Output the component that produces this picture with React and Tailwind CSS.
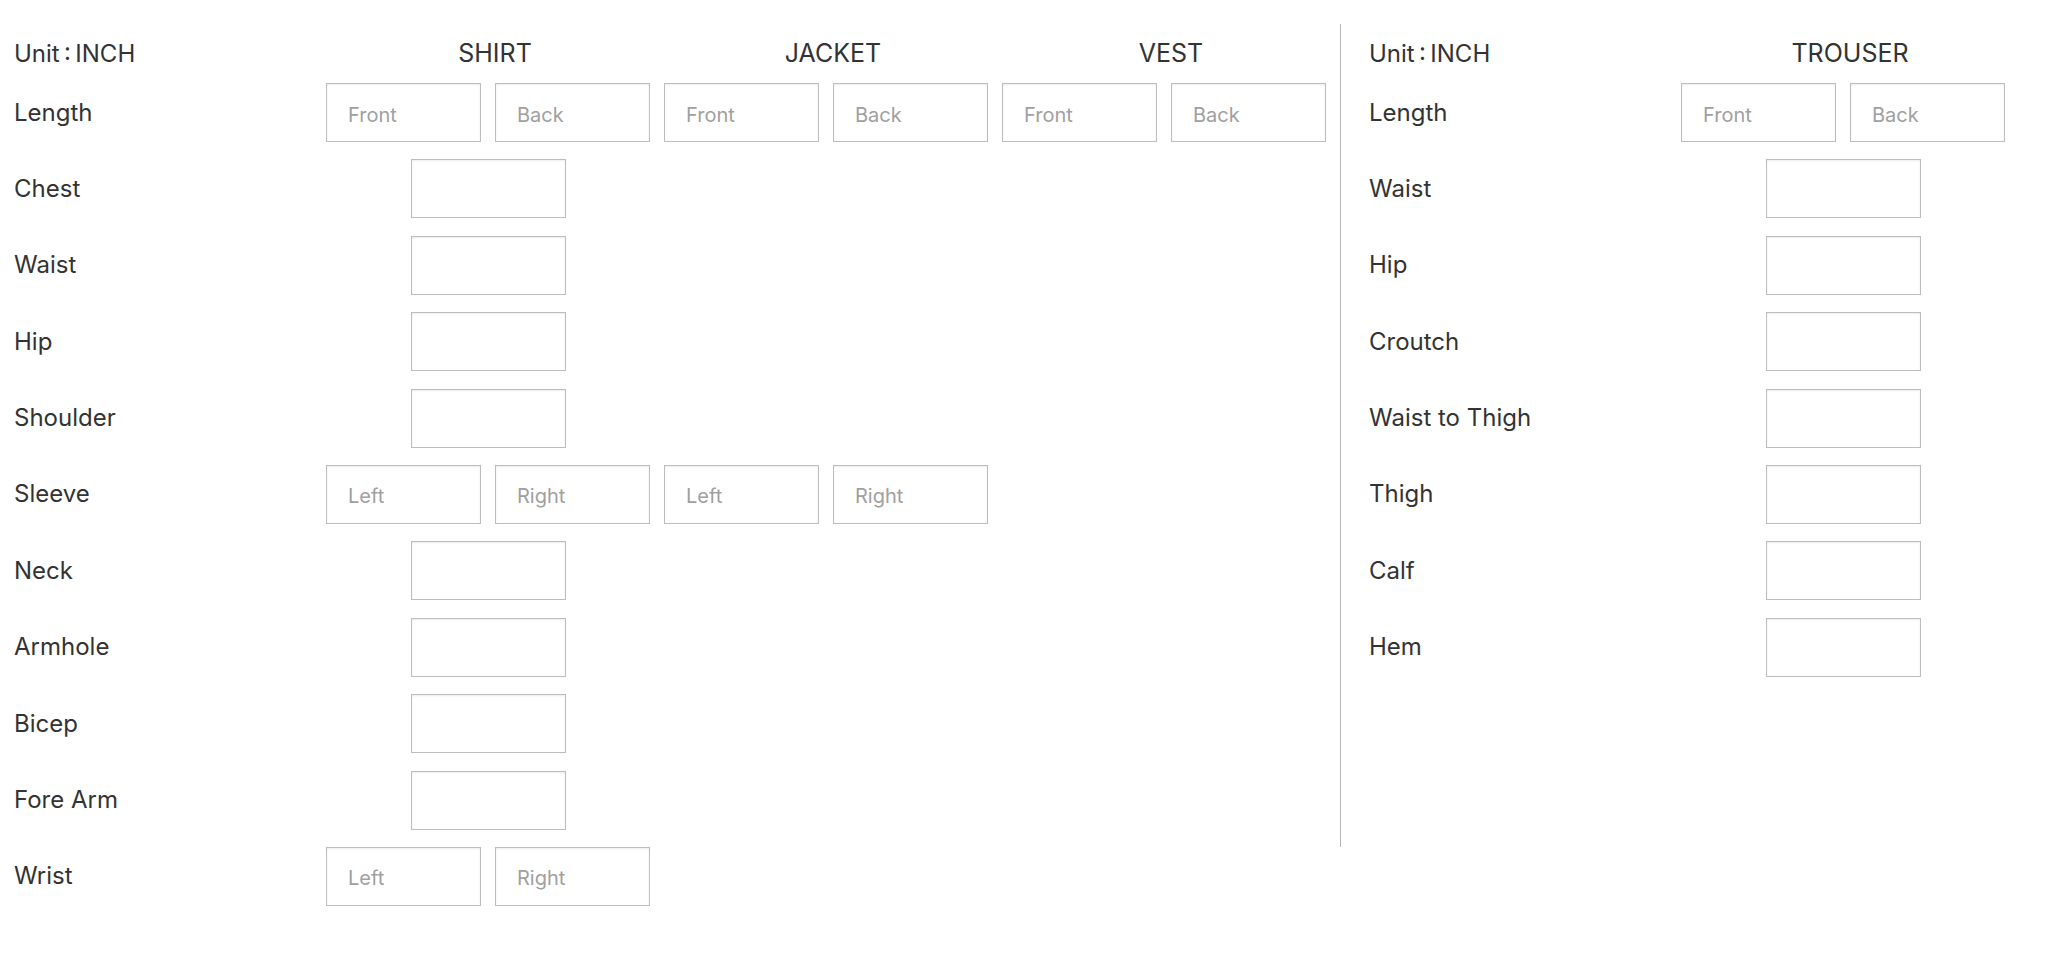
import { useState } from "react";

const LEFT_GROUPS = ["SHIRT", "JACKET", "VEST"];

// each entry: label + one cell per garment column
const leftRows = [
  { label: "Length", cells: [["Front", "Back"], ["Front", "Back"], ["Front", "Back"]] },
  { label: "Chest", cells: ["single"] },
  { label: "Waist", cells: ["single"] },
  { label: "Hip", cells: ["single"] },
  { label: "Shoulder", cells: ["single"] },
  { label: "Sleeve", cells: [["Left", "Right"], ["Left", "Right"]] },
  { label: "Neck", cells: ["single"] },
  { label: "Armhole", cells: ["single"] },
  { label: "Bicep", cells: ["single"] },
  { label: "Fore Arm", cells: ["single"] },
  { label: "Wrist", cells: [["Left", "Right"]] },
];

const rightRows = [
  { label: "Length", cells: [["Front", "Back"]] },
  { label: "Waist", cells: ["single"] },
  { label: "Hip", cells: ["single"] },
  { label: "Croutch", cells: ["single"] },
  { label: "Waist to Thigh", cells: ["single"] },
  { label: "Thigh", cells: ["single"] },
  { label: "Calf", cells: ["single"] },
  { label: "Hem", cells: ["single"] },
];

const inputClass =
  "w-[155px] h-[59px] border border-[#bdbdbd] bg-white pl-[21px] pt-[4px] text-[20px] text-[#333] placeholder:text-[#a0a0a0] shadow-[inset_0_1px_2px_rgba(0,0,0,0.08)] outline-none focus:border-[#888]";

const MeasureInput = ({ placeholder }) => {
  const [value, setValue] = useState("");
  return (
    <input
      type="text"
      value={value}
      placeholder={placeholder}
      onChange={(e) => setValue(e.target.value)}
      className={inputClass}
    />
  );
};

const Cell = ({ cell }) => {
  if (cell === "single") {
    return (
      <div className="w-[338px] pr-[14px] flex justify-center">
        <MeasureInput />
      </div>
    );
  }
  return (
    <div className="w-[338px] flex gap-[14px]">
      <MeasureInput placeholder={cell[0]} />
      <MeasureInput placeholder={cell[1]} />
    </div>
  );
};

const Section = ({ groups, rows }) => (
  <div className="flex flex-col">
    {/* Header */}
    <div className="h-[59px] flex items-center">
      <div className="w-[312px] text-[24px] text-[#333]">Unit&thinsp;:&thinsp;INCH</div>
      {groups.map((g) => (
        <div key={g} className="w-[338px] text-center text-[25px] text-[#333]">
          {g}
        </div>
      ))}
    </div>

    {/* Measurement rows */}
    <div className="flex flex-col gap-[17.4px]">
      {rows.map((row) => (
        <div key={row.label} className="h-[59px] flex items-center">
          <div className="w-[312px] text-[24px] text-[#333]">{row.label}</div>
          {row.cells.map((cell, i) => (
            <Cell key={i} cell={cell} />
          ))}
        </div>
      ))}
    </div>
  </div>
);

export default function App() {
  return (
    <div className="min-h-screen w-full bg-white font-['Inter',sans-serif] pt-[24px]">
      <div className="flex items-start">
        <div className="w-[1340px] pl-[14px]">
          <Section groups={LEFT_GROUPS} rows={leftRows} />
        </div>
        <div className="flex-1 h-[823px] border-l border-[#b5b5b5] pl-[28px]">
          <Section groups={["TROUSER"]} rows={rightRows} />
        </div>
      </div>
    </div>
  );
}
